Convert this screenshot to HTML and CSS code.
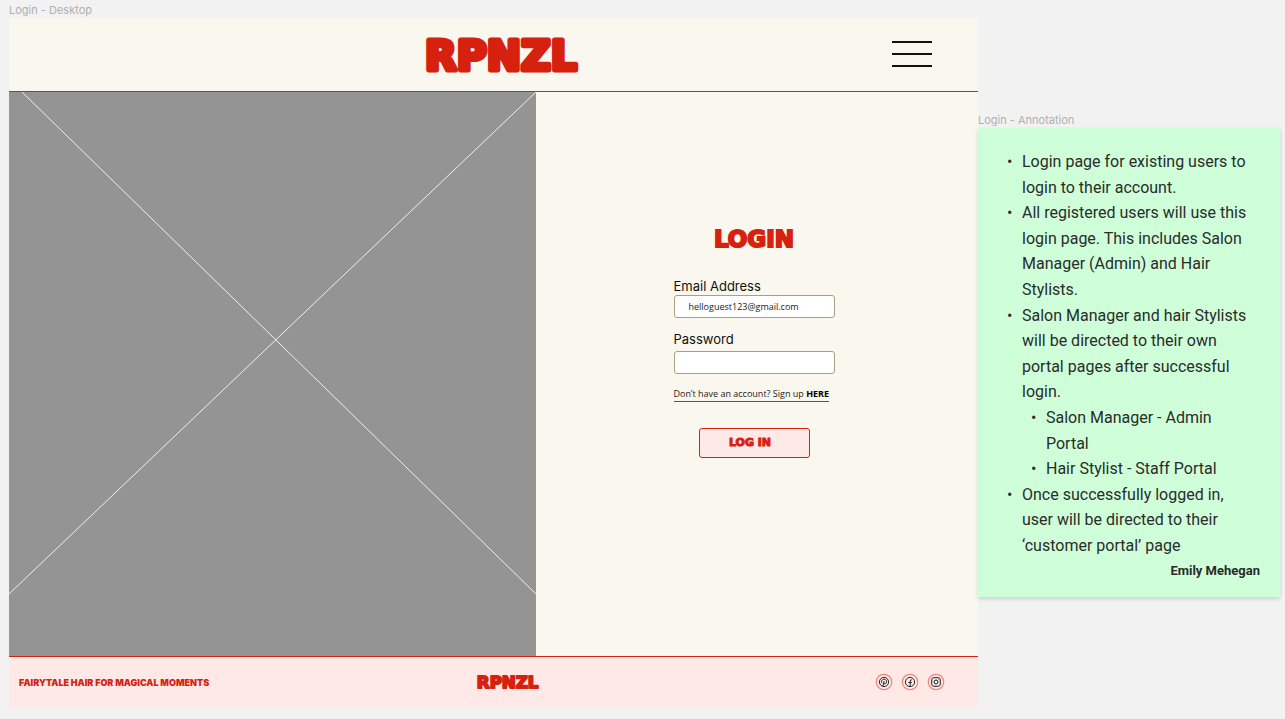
FILE: index.html
```html
<!DOCTYPE html>
<html lang="en">
<head>
<meta charset="utf-8">
<meta name="viewport" content="width=device-width, initial-scale=1">
<title>RPNZL Login</title>
<link rel="stylesheet" href="styles.css">
</head>
<body>
<div class="canvas">
  <section class="frame">
    <div class="frame-label">Login - Desktop</div>
    <div class="page">
      <header class="header">
        <svg class="logo" viewBox="0 0 148 44" role="img" aria-label="RPNZL"><text x="73" y="38" text-anchor="middle">RPNZL</text></svg>
        <button class="menu" type="button" aria-label="Menu"><span></span><span></span><span></span></button>
      </header>
      <main class="main">
        <svg class="photo" viewBox="0 0 527 564" preserveAspectRatio="none" aria-hidden="true">
          <path d="M13 0 527 502M527 0 0 502"/>
        </svg>
        <form class="login">
          <h1 class="title">LOGIN</h1>
          <label class="label" for="email">Email Address</label>
          <input class="field" id="email" type="email" value="helloguest123@gmail.com">
          <label class="label label-next" for="password">Password</label>
          <input class="field" id="password" type="password">
          <a class="signup" href="#">Don’t have an account? Sign up <b>HERE</b></a>
          <button class="submit" type="submit">LOG IN</button>
        </form>
      </main>
      <footer class="footer">
        <p class="tagline">FAIRYTALE HAIR FOR MAGICAL MOMENTS</p>
        <svg class="logo logo-small" viewBox="0 0 148 44" role="img" aria-label="RPNZL"><text x="73" y="38" text-anchor="middle">RPNZL</text></svg>
        <nav class="social">
          <a href="#" aria-label="Pinterest"><svg viewBox="0 0 18 18"><circle class="ring" cx="9" cy="9" r="7.7"/><circle cx="9" cy="9" r="4.6"/><path d="M7 10.2C5.7 8.2 7 6.300 9.100 6.300c2.200 0 3.100 2 2.200 3.600-.7 1.300-2.200 1.200-2.500.3M9.200 8l-1.300 5"/></svg></a>
          <a href="#" aria-label="Facebook"><svg viewBox="0 0 18 18"><circle class="ring" cx="9" cy="9" r="7.7"/><circle cx="9" cy="9" r="4.600"/><path d="M9.200 13.500V8q0-1.400 1.700-1.200M7.300 9.500h3.500"/></svg></a>
          <a href="#" aria-label="Instagram"><svg viewBox="0 0 18 18"><circle class="ring" cx="9" cy="9" r="7.7"/><rect x="4.700" y="4.700" width="8.600" height="8.600" rx="2.200"/><circle cx="9" cy="9" r="2"/><path d="M11.200 6.700h.5"/></svg></a>
        </nav>
      </footer>
    </div>
  </section>
  <aside class="notes">
    <div class="frame-label">Login - Annotation</div>
    <div class="sticky">
      <ul class="list">
        <li>Login page for existing users to login to their account.</li>
        <li>All registered users will use this login page. This includes Salon Manager (Admin) and Hair Stylists.</li>
        <li>Salon Manager and hair Stylists will be directed to their own portal pages after successful login.
          <ul class="list">
            <li>Salon Manager - Admin Portal</li>
            <li>Hair Stylist - Staff Portal</li>
          </ul>
        </li>
        <li>Once successfully logged in, user will be directed to their ‘customer portal’ page</li>
      </ul>
      <p class="author">Emily Mehegan</p>
    </div>
  </aside>
</div>
</body>
</html>
```
FILE: styles.css
```css
* { box-sizing: border-box; }

body {
  margin: 0;
  background: #f2f2f2;
  color: #111;
  font-family: Inter, "Liberation Sans", sans-serif;
}

.canvas {
  display: grid;
  grid-template-columns: 1fr 302px;
  min-height: 100vh;
  padding: 2px 5px 12px 9px;
}

.frame { display: flex; flex-direction: column; }

.frame-label {
  color: #b0b0b0;
  font-size: 11px;
  line-height: 16px;
}

.page {
  flex: 1;
  display: flex;
  flex-direction: column;
  background: #faf7ee;
}

.header {
  display: grid;
  grid-template-columns: 1fr auto 1fr;
  align-items: center;
  height: 74px;
  padding: 0 46px 2px 63px;
  border-bottom: 1px solid #d7210f;
}

.logo { grid-column: 2; width: 148px; overflow: visible; }

.logo text {
  fill: #d7210f;
  stroke: #d7210f;
  stroke-width: 5px;
  stroke-linejoin: round;
  font-family: "DejaVu Sans", sans-serif;
  font-size: 41px;
  font-weight: 700;
}

.menu {
  justify-self: end;
  display: grid;
  gap: 10px;
  width: 40px;
  padding: 0;
  border: 0;
  background: none;
}

.menu span { height: 2px; background: #111; }

.main {
  flex: 1;
  display: grid;
  grid-template-columns: 527fr 442fr;
}

.photo {
  width: 100%;
  height: 100%;
  background: #949494;
}

.photo path { fill: none; stroke: #eee; stroke-width: 1; }

.login {
  display: flex;
  flex-direction: column;
  align-items: flex-start;
  justify-self: center;
  width: 167px;
  margin-top: 131px;
  padding-right: 6px;
}

.title {
  align-self: center;
  margin: 0 0 23px;
  color: #d7210f;
  -webkit-text-stroke: 2px #d7210f;
  font-family: "DejaVu Sans", sans-serif;
  font-size: 23px;
  font-weight: 700;
  line-height: 32px;
}

.label { margin-bottom: 1px; font-size: 13px; line-height: 16px; }
.label-next { margin: 13px 0 4px; }

.field {
  width: 100%;
  height: 23px;
  padding: 0 14px;
  border: 1px solid #a3a382;
  border-radius: 3px;
  background: #fff;
  color: #222;
  font: 9px "Open Sans", "Liberation Sans", sans-serif;
}

.signup {
  margin-top: 13px;
  border-bottom: 1px solid #555;
  color: #222;
  font-family: "Open Sans", "Liberation Sans", sans-serif;
  font-size: 9px;
  line-height: 14px;
  text-decoration: none;
  white-space: nowrap;
}

.signup b { color: #000; }

.submit {
  align-self: center;
  width: 111px;
  height: 30px;
  margin-top: 26px;
  padding: 0 8px 2px 0;
  border: 1px solid #d7210f;
  border-radius: 3px;
  background: #fee9e7;
  color: #d7210f;
  -webkit-text-stroke: 1px #d7210f;
  font: 700 11px "DejaVu Sans", sans-serif;
}

.footer {
  display: grid;
  grid-template-columns: 459fr auto 407fr;
  align-items: center;
  height: 52px;
  padding: 0 33px 1px 10px;
  border-top: 1px solid #d7210f;
  background: #fee9e7;
}

.tagline {
  margin: 0;
  color: #d7210f;
  font-size: 9px;
  font-weight: 900;
  white-space: nowrap;
}

.logo-small { width: 60px; }

.social { display: flex; justify-content: flex-end; gap: 8px; }
.social a { display: flex; }

.social svg {
  width: 18px;
  height: 18px;
  fill: none;
  stroke: #222;
  stroke-width: 1;
}

.social .ring { stroke: #f08a7f; stroke-width: 1.3; }

.notes { padding-top: 110px; }

.sticky {
  padding: 21px 20px 14px 44px;
  background: #ceffd9;
  box-shadow: 0 2px 4px rgba(0, 0, 0, .15);
  color: #2b2b2b;
  font-family: Roboto, "Liberation Sans", sans-serif;
}

.list {
  margin: 0;
  padding: 0;
  list-style: none;
  font-size: 16px;
  line-height: 1.6;
}

.sticky > .list { padding-right: 11px; }
.list .list { padding-left: 24px; }

.list li { position: relative; }

.list li::before {
  content: "•";
  position: absolute;
  left: -15px;
}

.author {
  margin: 0;
  font-size: 13px;
  font-weight: 700;
  line-height: 24px;
  text-align: right;
}
```
